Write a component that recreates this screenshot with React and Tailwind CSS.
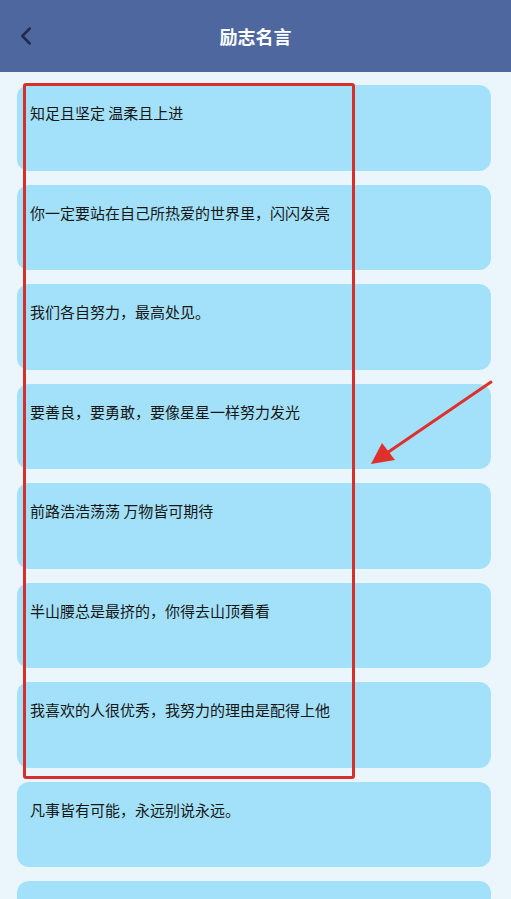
import { ChevronLeft } from "lucide-react";

const quotes = [
  "知足且坚定 温柔且上进",
  "你一定要站在自己所热爱的世界里，闪闪发亮",
  "我们各自努力，最高处见。",
  "要善良，要勇敢，要像星星一样努力发光",
  "前路浩浩荡荡 万物皆可期待",
  "半山腰总是最挤的，你得去山顶看看",
  "我喜欢的人很优秀，我努力的理由是配得上他",
  "凡事皆有可能，永远别说永远。",
  "",
];

function App() {
  return (
    <div
      className="relative h-[899px] overflow-hidden bg-[#eaf5fc]"
      style={{ fontFamily: '"Noto Sans CJK SC", "Noto Sans", sans-serif' }}
    >
      {/* header */}
      <div className="relative flex h-[72px] items-center justify-center bg-[#4e689f]">
        <ChevronLeft
          className="absolute left-[11px] top-[21px] text-[#1d2c4f]"
          size={30}
          strokeWidth={2}
        />
        <h1 className="text-[18px] font-bold text-white">励志名言</h1>
      </div>

      {/* list */}
      <div className="flex flex-col gap-[14px] px-[17px] pr-[20px] pt-[13px]">
        {quotes.map((q, i) => (
          <div
            key={i}
            className="h-[85.5px] shrink-0 rounded-[12px] bg-[#a3e1fa] px-[13px] pt-[18px] text-[15px] leading-[20px] text-[#161616]"
          >
            {q}
          </div>
        ))}
      </div>

      {/* annotation */}
      <div className="absolute left-[23px] top-[83px] h-[696px] w-[332px] rounded-[3px] border-[3px] border-[#d6302c]" />
      <svg
        className="absolute left-[360px] top-[375px]"
        width="140"
        height="100"
        viewBox="0 0 140 100"
      >
        <line x1="131" y1="7" x2="24" y2="80" stroke="#e0302c" strokeWidth="3" strokeLinecap="round" />
        <polygon points="11,89 22,68 35,85" fill="#e0302c" />
      </svg>
    </div>
  );
}

export default App;
